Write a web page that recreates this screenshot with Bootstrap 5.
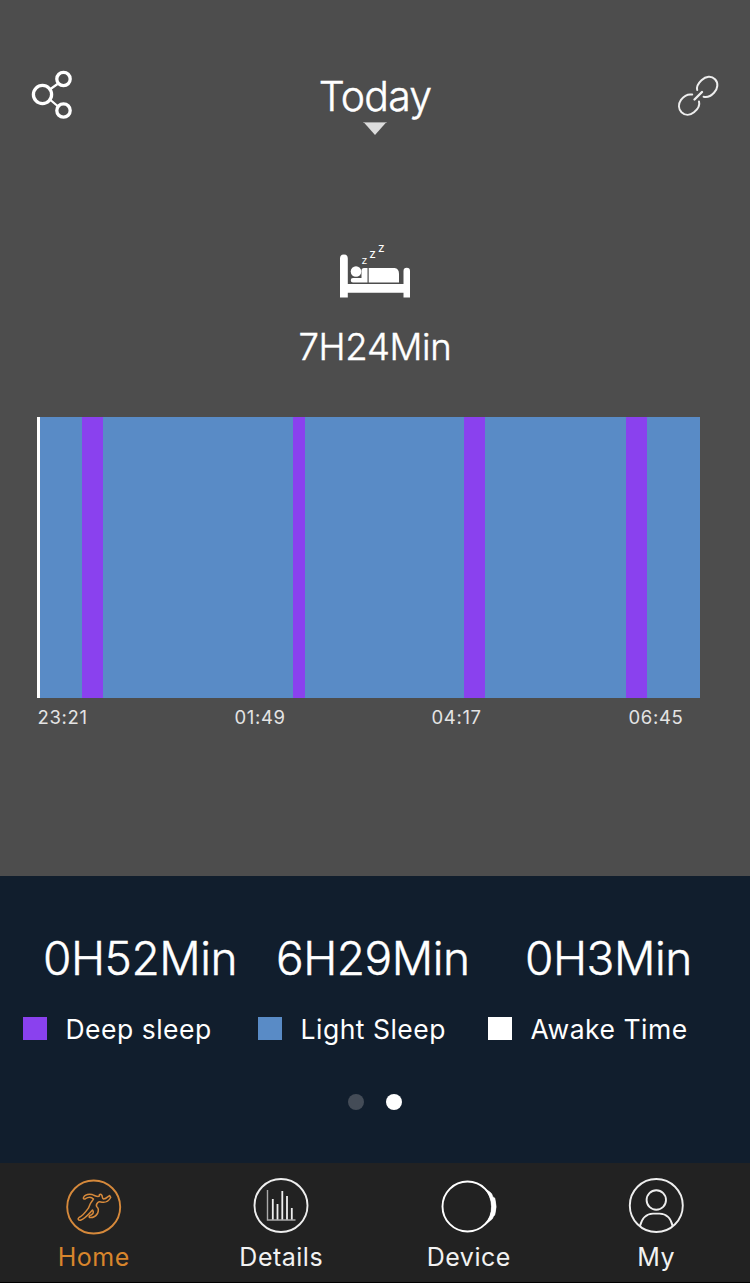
<!DOCTYPE html>
<html lang="en">
<head>
<meta charset="utf-8">
<meta name="viewport" content="width=device-width, initial-scale=1">
<title>Sleep</title>
<link href="https://cdn.jsdelivr.net/npm/bootstrap@5.3.0/dist/css/bootstrap.min.css" rel="stylesheet">
<style>
  body { font-family: Inter, "Liberation Sans", sans-serif; background: #000; color: #fff; }
  .screen { height: 1283px; }
  .sleep-pane { height: 876px; background: #4d4d4d; }
  .top-bar { height: 146px; padding: 68px 29px 0; }
  .page-title { font-size: 41px; line-height: 50px; font-weight: 300; margin: 3px 0 1px; letter-spacing: -.8px; }
  .page-title, .total, .stat-value { -webkit-text-stroke: .45px currentColor; }
  .icon { display: block; flex: none; }
  .bed { margin-top: 94px; }
  .total { font-size: 36.5px; line-height: 44px; font-weight: 300; margin-top: 25px; letter-spacing: -.3px; }
  .chart { width: 663px; height: 281px; margin: 48px 0 0 37px; }
  .deep { background: #8a41ee; }
  .light-sleep { background: #598bc6; }
  .awake { background: #fff; }
  .axis { margin: 7px 0 0 37.5px; font-size: 18.5px; line-height: 24px; letter-spacing: .65px; color: #e4e4e4; }
  .axis span { width: 197px; }
  .stats-pane { height: 287px; background: #111e2d; padding-top: 52px; }
  .stat-value { font-size: 46px; line-height: 60px; font-weight: 300; letter-spacing: -.45px; }
  .stat-values { padding-left: 43px; }
  .legend { padding-left: 23px; margin-top: 23px; height: 36px; }
  .legend-item { font-size: 26.5px; line-height: 36px; font-weight: 400; letter-spacing: .5px; }
  .swatch { width: 24px; height: 23px; flex: none; margin: -2px 18.500px 0 0; }
  .pager { gap: 22px; margin-top: 47px; }
  .page-dot { width: 16px; height: 16px; background: #fff; }
  .page-dot.off { background: #444c57; }
  .tab-bar { height: 119px; background: #222; }
  .tab-item { width: 187.5px; padding-top: 13px; font-size: 25px; line-height: 32px; letter-spacing: .5px; color: #f2f2f2; text-decoration: none; font-weight: 400; }
  .tab-item.active { color: #d8852c; }
  .tab-item svg { margin-bottom: 5px; }
</style>
</head>
<body>
<div class="screen d-flex flex-column overflow-hidden">
  <main class="sleep-pane flex-shrink-0">
    <header class="top-bar d-flex justify-content-between">
      <svg class="icon" width="46" height="54" viewBox="29 68 46 54" fill="none" stroke="#fff" stroke-width="3.3">
        <path d="M50.500 89 57.500 84M50.500 100 57.500 106" stroke-width="2.200"/>
        <circle cx="42.500" cy="94.500" r="9.100"/><circle cx="63.500" cy="79" r="6.700"/><circle cx="63.500" cy="110.500" r="6.700"/>
      </svg>
      <div class="d-flex flex-column align-items-center">
        <h1 class="page-title">Today</h1>
        <svg class="icon" width="24" height="13" viewBox="0 0 24 13"><path d="M.5 0H23.500L12 13Z" fill="#dcdcdc"/><path d="M.5 .5H23.500" stroke="#a5a5a5"/></svg>
      </div>
      <svg class="icon" width="46" height="54" viewBox="675 68 46 54" fill="none" stroke="#eee" stroke-width="2" stroke-linecap="round">
        <path d="M692.200 94.600C688 93.700 684 96 681 99.800C678 104 678.500 109 681.500 112.200C685 115.500 690 115.700 694 112.300C698 109 700.200 105.500 699 101.500"/>
        <path d="M697.200 90C696.300 86.500 698.500 83 701.500 80.200C706 76 711.500 75.700 715 79.300C718.500 83 718 88.500 714 92.800C711 96 707.500 97.800 703.600 96.800"/>
        <path d="M694.500 99.500 702 92" stroke-width="2.400"/>
      </svg>
    </header>

    <svg class="icon bed mx-auto" width="74" height="60" viewBox="338 240 74 60" fill="#fff">
      <path d="M340 297.500V258.500a3.900 3.900 0 0 1 7.800 0V284H403.500V271a3.250 3.250 0 0 1 6.500 0V297.500H403.500V292.800H347.800V297.500Z"/>
      <circle cx="356" cy="271.500" r="5.300"/>
      <path d="M353 278H361.500V270.500Q361.500 268 364 268H367.500V282.500H353a2.200 2.200 0 0 1 0-4.500ZM368.700 268H394.500Q399 268.500 399 274V282.500H368.700Z"/>
      <g><text x="361.500" y="263.500" font-size="10.500">z</text><text x="369.300" y="258" font-size="12">z</text><text x="378" y="251.500" font-size="12">z</text></g>
    </svg>
    <div class="total text-center">7H24Min</div>

    <div class="chart d-flex">
      <div class="awake" style="width:3px"></div><div class="light-sleep" style="width:42px"></div>
      <div class="deep" style="width:21px"></div><div class="light-sleep" style="width:190px"></div>
      <div class="deep" style="width:12px"></div><div class="light-sleep" style="width:159px"></div>
      <div class="deep" style="width:21px"></div><div class="light-sleep" style="width:141px"></div>
      <div class="deep" style="width:21px"></div><div class="light-sleep" style="width:53px"></div>
    </div>
    <div class="axis d-flex"><span>23:21</span><span>01:49</span><span>04:17</span><span class="w-auto">06:45</span></div>
  </main>

  <section class="stats-pane flex-shrink-0">
    <div class="stat-values d-flex">
      <div class="stat-value" style="width:233px">0H52Min</div>
      <div class="stat-value" style="width:249px">6H29Min</div>
      <div class="stat-value">0H3Min</div>
    </div>
    <div class="legend d-flex">
      <div class="legend-item d-flex align-items-center" style="width:235px"><span class="swatch deep"></span>Deep sleep</div>
      <div class="legend-item d-flex align-items-center" style="width:230px"><span class="swatch light-sleep"></span>Light Sleep</div>
      <div class="legend-item d-flex align-items-center"><span class="swatch awake"></span>Awake Time</div>
    </div>
    <div class="pager d-flex justify-content-center"><span class="page-dot off rounded-circle"></span><span class="page-dot rounded-circle"></span></div>
  </section>

  <nav class="tab-bar d-flex flex-shrink-0">
    <a class="tab-item active d-flex flex-column align-items-center" href="#">
      <svg class="icon" width="60" height="60" viewBox="64 1176 60 60" fill="none" stroke="#d6893b" stroke-width="1.500" stroke-linejoin="round">
        <circle cx="93.700" cy="1207" r="26.500" stroke-width="1.900"/>
        <path d="M83.500 1197.500C85 1194.500 88.500 1194 92 1194.500C95 1195.500 97.500 1197.500 99.500 1196C98.500 1194.500 100.500 1193.500 102 1195.500C102.500 1197 102 1198.500 103.500 1199C106 1199 107.500 1197 109.500 1195.500L110.700 1197.500C109 1200.500 106.500 1202.500 103 1202.300C100.500 1202.300 99.500 1201 97.800 1202.500C96.500 1204 95.500 1205.500 97 1207C99.500 1209 98.500 1211 97.500 1213.500C96 1216 93 1217.800 89.500 1217.500C88.500 1216.500 89.500 1215.500 91 1215C93.500 1213.800 94 1212 92.500 1210C90 1212.500 86 1218 80.500 1220.300C78 1220.500 77.500 1218.500 79 1217.500C83 1216 86 1211.500 88.500 1208C89.500 1205 91 1202 93.500 1199C91 1196.500 88 1197 85.500 1198.700C84 1199.300 83 1198.700 83.500 1197.500Z"/>
      </svg>Home</a>
    <a class="tab-item d-flex flex-column align-items-center" href="#">
      <svg class="icon" width="60" height="60" viewBox="251 1176 60 60" fill="none" stroke="#eee" stroke-width="1.800">
        <circle cx="281" cy="1205.500" r="26.500" stroke-width="1.900"/>
        <path d="M267.500 1190V1220H295.500" stroke="#aaa" stroke-width="1.400"/><path d="M272.800 1199V1219.500M277.500 1204V1219.500M282.300 1191V1219.500M287 1196V1219.500M291.800 1208V1219.500"/>
      </svg>Details</a>
    <a class="tab-item d-flex flex-column align-items-center" href="#">
      <svg class="icon" width="60" height="60" viewBox="439 1176 60 60" fill="none" stroke="#fff" stroke-width="1.900">
        <circle cx="467.500" cy="1206.500" r="25"/>
        <path d="M484 1188L490 1192Q492 1193.200 493 1197L494.800 1198Q497.500 1206.500 494.800 1215L493.500 1216.500Q492.500 1219.500 490.500 1220.500L485 1225Q491.500 1217 491.500 1206.500Q491 1195 484 1188Z" fill="#fff" stroke-width=".5"/>
      </svg>Device</a>
    <a class="tab-item d-flex flex-column align-items-center" href="#">
      <svg class="icon" width="60" height="60" viewBox="626 1176 60 60" fill="none" stroke="#eee" stroke-width="1.900">
        <circle cx="656.300" cy="1205.500" r="26.500"/><circle cx="656.300" cy="1200" r="9.700"/>
        <path d="M640 1226Q643 1214 653 1213.600H659.500Q670 1214 672.600 1226"/>
      </svg>My</a>
  </nav>
</div>
<script src="https://cdn.jsdelivr.net/npm/bootstrap@5.3.0/dist/js/bootstrap.bundle.min.js"></script>
</body>
</html>
